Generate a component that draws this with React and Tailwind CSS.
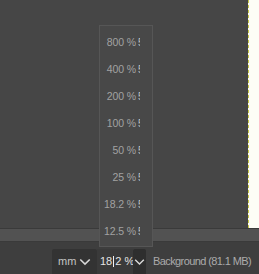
const zooms = ["800 %", "400 %", "200 %", "100 %", "50 %", "25 %", "18.2 %", "12.5 %"];

const Chevron = ({ className }) => (
  <svg viewBox="0 0 14 9" className={className} fill="none">
    <path d="M1.5 1.5 L7 7 L12.5 1.5" stroke="#d8d8d8" strokeWidth="1.8" />
  </svg>
);

export default function App() {
  return (
    <div
      className="relative w-[259px] h-[274px] flex flex-col bg-[#464646] overflow-hidden"
      style={{ fontFamily: '"Liberation Sans", Arial, sans-serif' }}
    >
      {/* Canvas area */}
      <div className="h-[228px] flex">
        <div className="flex-1" />
        <div className="w-[11px] h-full bg-[#fdfdf6] border-l border-dashed border-[#c8c84a]" />
      </div>

      {/* Scrollbar strip */}
      <div className="h-[14px] bg-[#525252] border-t border-b border-[#3a3a3a]" />

      {/* Status bar */}
      <div className="flex-1 bg-[#3e3e3e] flex items-end pl-[52px]">
        <div className="w-[45px] h-[25px] bg-[#333333] rounded-t-[2px] flex items-center pl-[6px] gap-[3px]">
          <span className="text-[11px] text-[#c4c4c4] leading-none">mm</span>
          <Chevron className="w-[12px] h-[8px]" />
        </div>
        <div className="w-[36px] h-[25px] bg-[#3a3a3a] flex items-center pl-[3px] overflow-hidden">
          <span className="text-[11px] text-[#e4e4e4] leading-none whitespace-nowrap">
            18<span className="inline-block w-px h-[11px] bg-[#f0f0f0] align-middle mx-[1px]" />2 %
          </span>
        </div>
        <div className="w-[13px] h-[25px] bg-[#2e2e2e] rounded-t-[2px] flex items-center justify-center">
          <Chevron className="w-[11px] h-[8px]" />
        </div>
        <div className="h-[25px] flex items-center pl-[7px]">
          <span className="text-[11px] text-[#ababab] leading-none tracking-[-0.6px] whitespace-nowrap">
            Background (81.1 MB)
          </span>
        </div>
      </div>

      {/* Zoom popup */}
      <div className="absolute left-[99px] top-[25px] w-[54px] h-[222px] bg-[#484848] border border-[#565656] pt-[3px]">
        {zooms.map((z) => (
          <div key={z} className="h-[27px] flex items-center justify-end pr-[12px]">
            <span className="text-[10.5px] text-[#a2a2a2] leading-none whitespace-nowrap tracking-[-0.1px]">
              {z}
            </span>
            <span className="ml-[2px] w-[2px] overflow-hidden text-[10px] text-[#c0c0c0] leading-none">
              5
            </span>
          </div>
        ))}
      </div>
    </div>
  );
}
